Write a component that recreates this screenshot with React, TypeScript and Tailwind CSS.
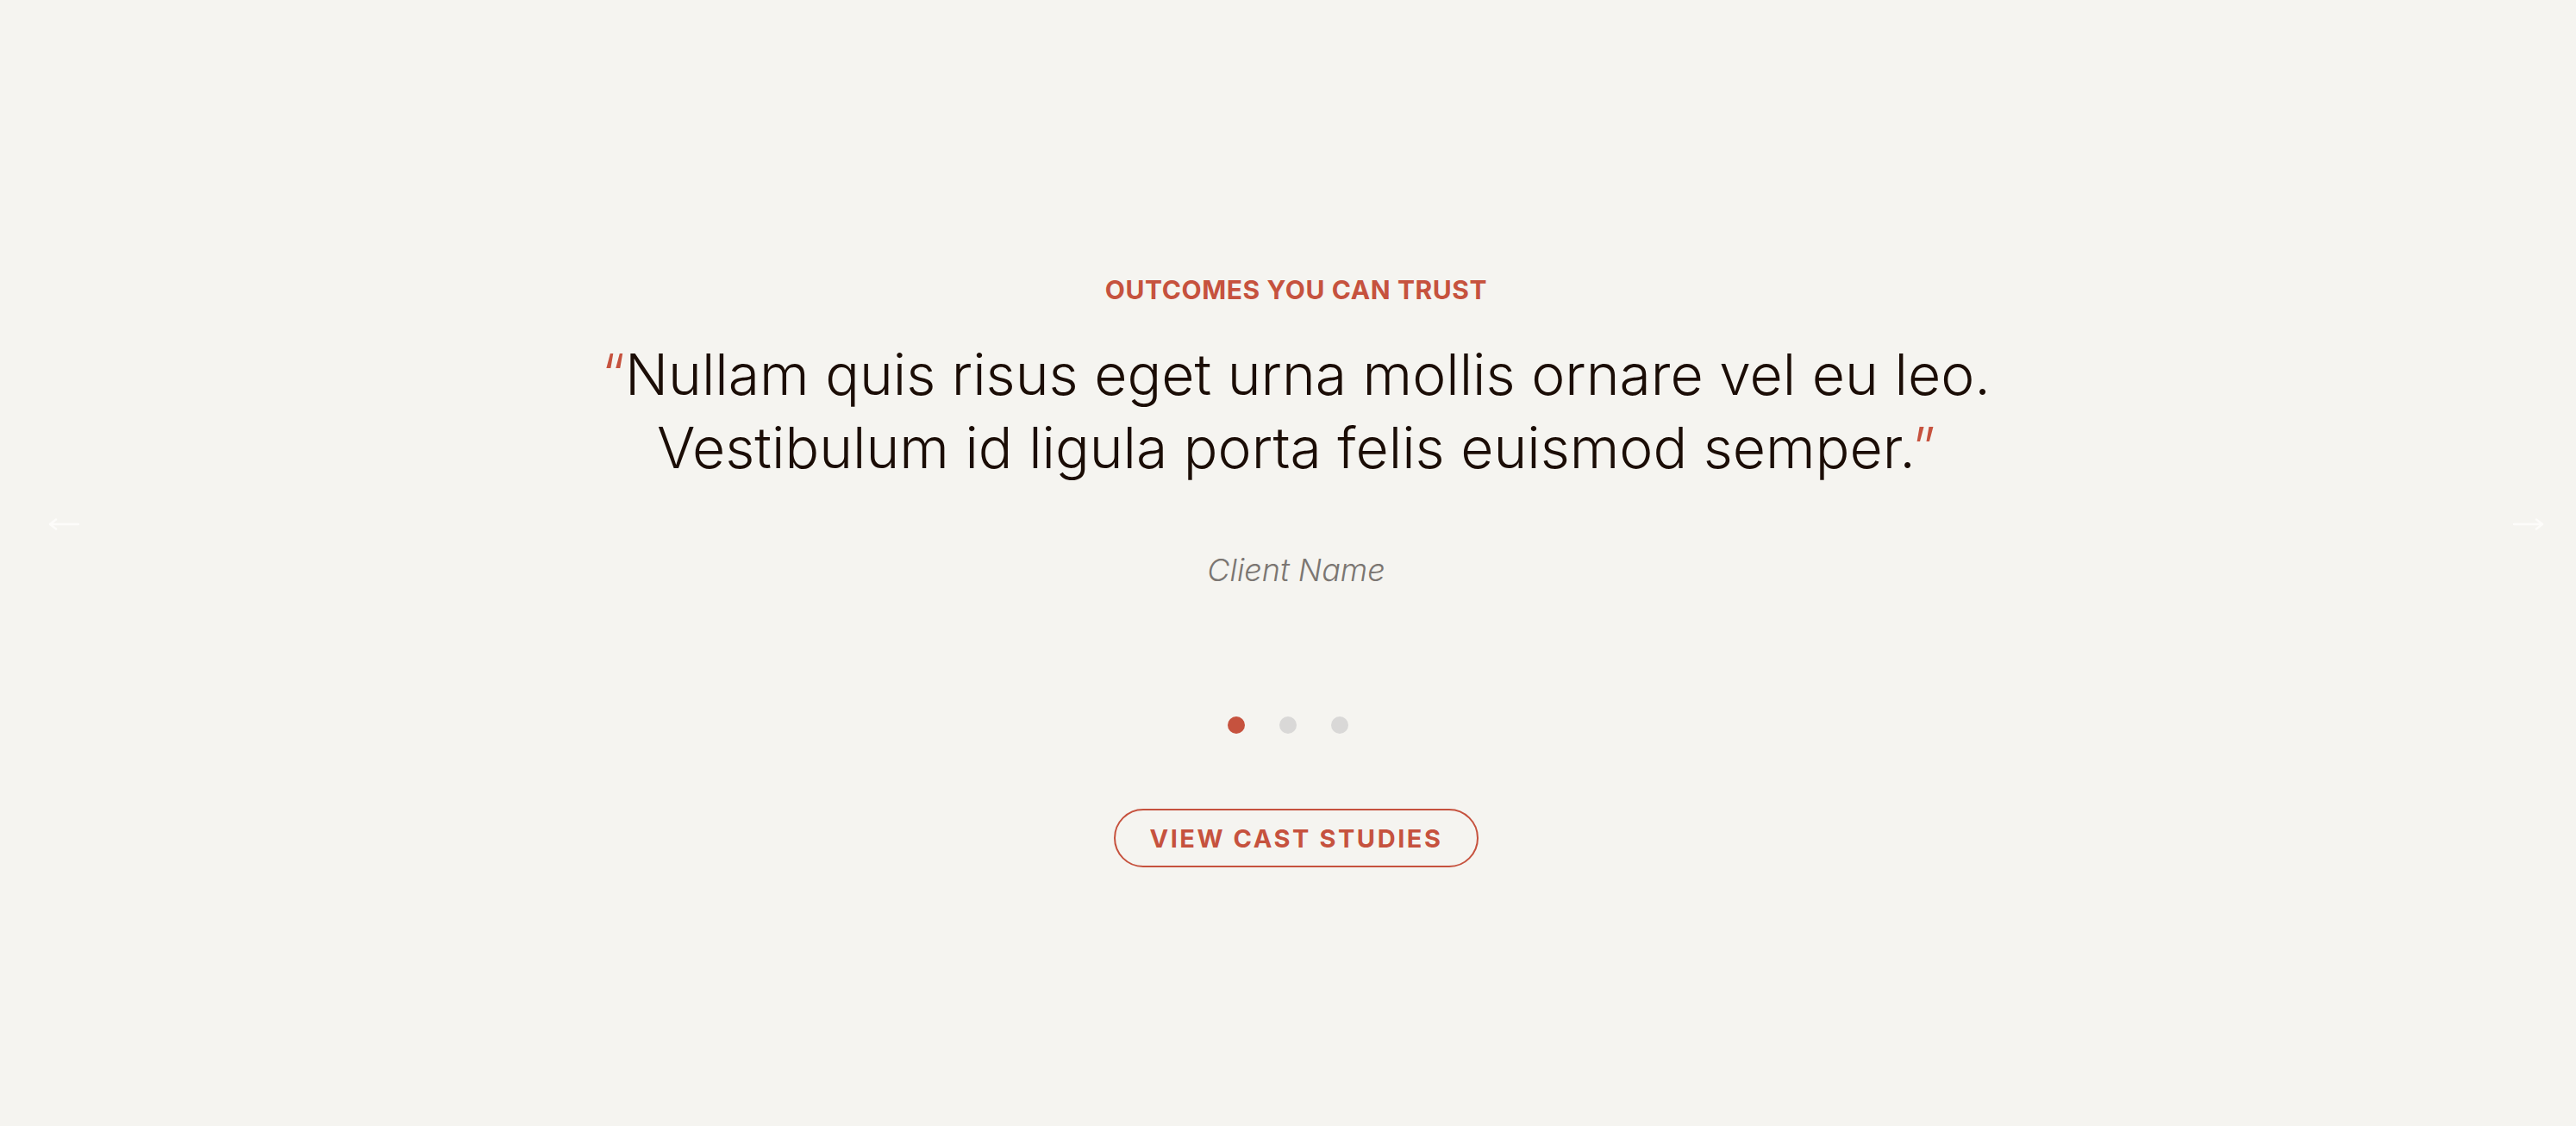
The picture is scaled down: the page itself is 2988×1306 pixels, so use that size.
import React from "react";

const font = { fontFamily: "Inter, 'Noto Sans', sans-serif" };

function Arrow({ dir }: { dir: "left" | "right" }) {
  return (
    <svg width="36" height="14" viewBox="0 0 36 14" fill="none" className="block">
      {dir === "left" ? (
        <path d="M35 7H2M9 1.5L2 7l7 5.5" stroke="#fdfcfa" strokeWidth="2.5" strokeLinecap="round" strokeLinejoin="round" />
      ) : (
        <path d="M1 7h33M27 1.5L34 7l-7 5.5" stroke="#fdfcfa" strokeWidth="2.5" strokeLinecap="round" strokeLinejoin="round" />
      )}
    </svg>
  );
}

export default function App() {
  return (
    <div className="relative w-full h-[1306px] bg-[#f5f4f0] flex flex-col items-center pt-[318px]" style={font}>
      <div className="flex flex-col items-center pl-[19px]">
        <div className="text-[30px] leading-[36px] font-bold tracking-[0.02em] text-[#c6523e] uppercase">
          Outcomes you can trust
        </div>
        <p className="mt-[38px] text-center text-[66px] leading-[85px] text-[#1b0d06] font-light">
          <span className="text-[#c6523e]">“</span>Nullam quis risus eget urna mollis ornare vel eu leo.
          <br />
          Vestibulum id ligula porta felis euismod semper.<span className="text-[#c6523e]">”</span>
        </p>
        <div className="mt-[77px] text-[36px] leading-[44px] italic font-light text-[#7b7672]">Client Name</div>
      </div>
      <div className="mt-[148px] flex gap-[40px]">
        <span className="w-5 h-5 rounded-full bg-[#c6523e]" />
        <span className="w-5 h-5 rounded-full bg-[#d9d8d7]" />
        <span className="w-5 h-5 rounded-full bg-[#d9d8d7]" />
      </div>
      <div className="pl-[19px]">
        <button className="mt-[87px] h-[68px] px-[39px] rounded-full border-2 border-[#c6523e] text-[#c6523e] text-[29px] font-bold tracking-[0.088em] leading-none">
          VIEW CAST STUDIES
        </button>
      </div>
      <div className="absolute left-[56px] top-[601px]">
        <Arrow dir="left" />
      </div>
      <div className="absolute right-[37px] top-[601px]">
        <Arrow dir="right" />
      </div>
    </div>
  );
}
